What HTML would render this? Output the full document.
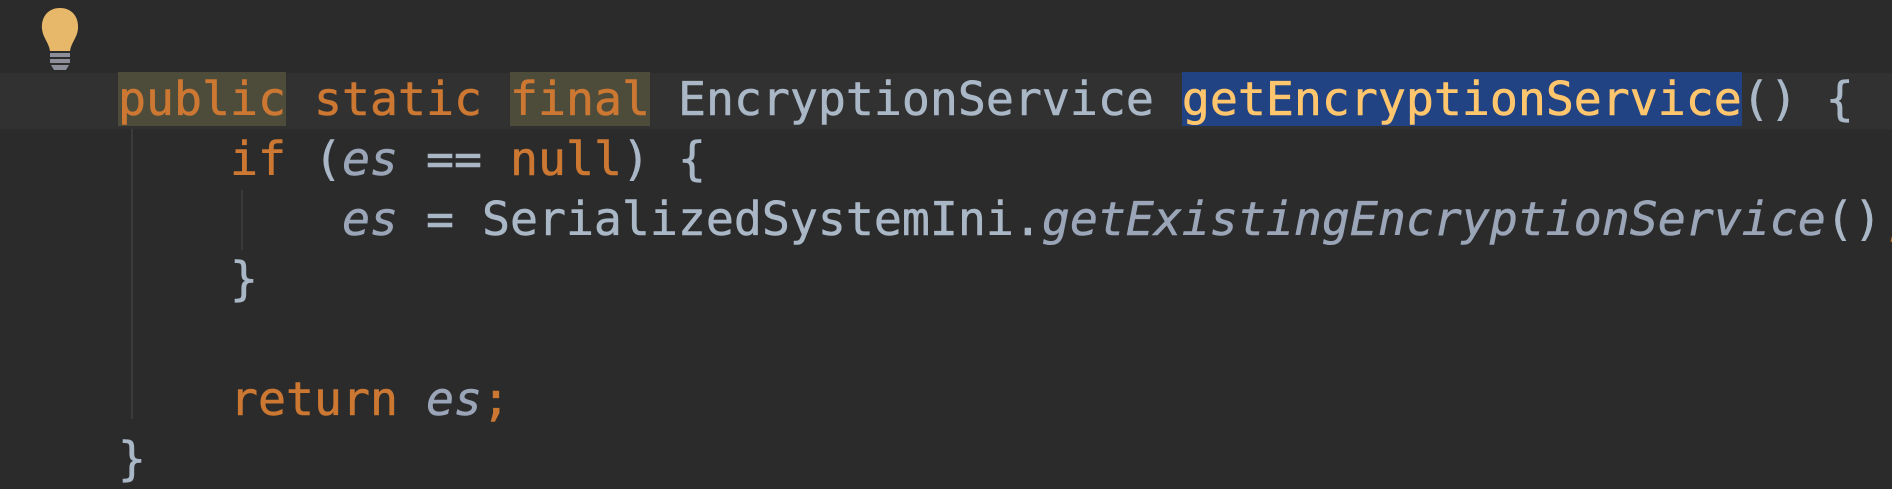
<!DOCTYPE html>
<html><head><meta charset="utf-8"><style>
html,body{margin:0;padding:0;background:#2b2b2b;width:1892px;height:446px;overflow:hidden}
.code{position:absolute;left:118px;top:69px;font-family:"DejaVu Sans Mono","Liberation Mono",monospace;font-size:46.5px;line-height:60px;color:#a9b7c6;white-space:pre;-webkit-text-stroke:0.6px currentColor}
.k{color:#cc7832}
.hl{background:#4d4b3a}
.sel{background:#214283;color:#ffc66d}
.i{font-style:italic;color:#9aa5b8}
.band{position:absolute;left:0;top:73px;width:1892px;height:56px;background:#313131}
</style></head><body>
<div class="band"></div>
<div style="position:absolute;left:131px;top:129px;width:2px;height:290px;background:#3a3a3a"></div>
<div style="position:absolute;left:241px;top:190px;width:2px;height:60px;background:#3a3a3a"></div>
<svg style="position:absolute;left:38px;top:5px" width="44" height="68" viewBox="0 0 44 66">
<path d="M22 2 C10 2 3 11 4 23 C5 32 11 37 12 45 L32 45 C33 37 39 32 40 23 C41 11 34 2 22 2Z" fill="#e8b86a"/>
<rect x="12" y="47" width="20" height="4" fill="#8c8f99"/>
<rect x="12" y="53" width="20" height="4" fill="#8c8f99"/>
<path d="M13 59 L31 59 L28 64 L16 64Z" fill="#8c8f99"/>
</svg>
<div class="code"><span class="k hl">public</span> <span class="k">static</span> <span class="k hl">final</span> EncryptionService <span class="sel">getEncryptionService</span>() {
    <span class="k">if</span> (<span class="i">es</span> == <span class="k">null</span>) {
        <span class="i">es</span> = SerializedSystemIni.<span class="i">getExistingEncryptionService</span>()<span class="k">;</span>
    }

    <span class="k">return</span> <span class="i">es</span><span class="k">;</span>
}</div>
</body></html>
